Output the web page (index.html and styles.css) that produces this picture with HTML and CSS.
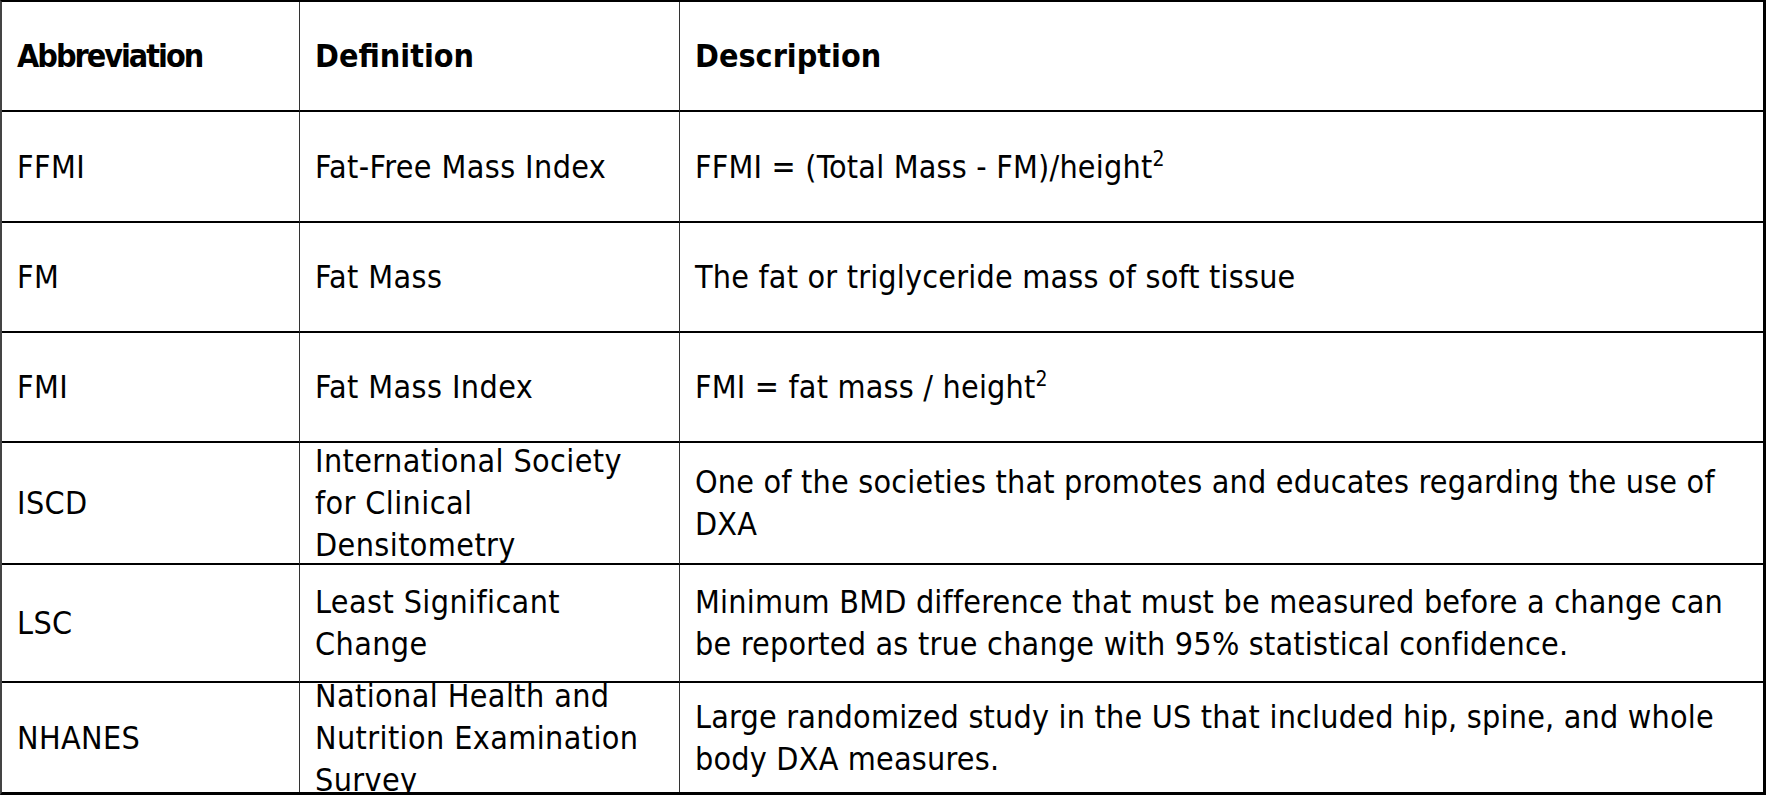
FILE: index.html
```html
<!DOCTYPE html>
<html lang="en">
<head>
<meta charset="utf-8">
<title>Abbreviations</title>
<link rel="stylesheet" href="styles.css">
</head>
<body>
<table class="glossary">
  <colgroup>
    <col class="col-abbr">
    <col class="col-def">
    <col class="col-desc">
  </colgroup>
  <thead>
    <tr class="row-head">
      <th class="th-abbr">Abbreviation</th>
      <th>Definition</th>
      <th>Description</th>
    </tr>
  </thead>
  <tbody>
    <tr class="row-ffmi">
      <td>FFMI</td>
      <td>Fat-Free Mass Index</td>
      <td>FFMI = (Total Mass - FM)/height<sup>2</sup></td>
    </tr>
    <tr class="row-single">
      <td>FM</td>
      <td>Fat Mass</td>
      <td>The fat or triglyceride mass of soft tissue</td>
    </tr>
    <tr class="row-single">
      <td>FMI</td>
      <td>Fat Mass Index</td>
      <td>FMI = fat mass / height<sup>2</sup></td>
    </tr>
    <tr class="row-iscd">
      <td><div class="fit">ISCD</div></td>
      <td><div class="fit">International Society for Clinical Densitometry</div></td>
      <td><div class="fit">One of the societies that promotes and educates regarding the use of DXA</div></td>
    </tr>
    <tr class="row-lsc">
      <td>LSC</td>
      <td>Least Significant Change</td>
      <td>Minimum BMD difference that must be measured before a change can be reported as true change with 95% statistical confidence.</td>
    </tr>
    <tr class="row-nhanes">
      <td><div class="fit">NHANES</div></td>
      <td><div class="fit">National Health and Nutrition Examination Survey</div></td>
      <td><div class="fit">Large randomized study in the US that included hip, spine, and whole body DXA measures.</div></td>
    </tr>
  </tbody>
</table>
</body>
</html>
```

FILE: styles.css
```css
* {
  box-sizing: border-box;
}

html,
body {
  margin: 0;
  padding: 0;
  background: #ffffff;
}

body {
  font-family: "DejaVu Sans Condensed", "DejaVu Sans", sans-serif;
  font-stretch: condensed;
  font-size: 32px;
  line-height: 42px;
  color: #000000;
}

.glossary {
  width: 1766px;
  table-layout: fixed;
  border-collapse: separate;
  border-spacing: 0;
  border-top: 2px solid #000000;
  border-left: 2px solid #444444;
  border-right: 3px solid #000000;
  border-bottom: 3px solid #000000;
}

.col-abbr {
  width: 298px;
}

.col-def {
  width: 380px;
}

.col-desc {
  width: 1083px;
}

.glossary th,
.glossary td {
  padding: 0 26px 0 15px;
  text-align: left;
  vertical-align: middle;
  border-bottom: 2px solid #000000;
  border-right: 1px solid #333333;
}

.glossary td {
  letter-spacing: 0.4px;
}

.glossary th {
  font-weight: bold;
  letter-spacing: 0;
}

.glossary .th-abbr {
  letter-spacing: -2px;
}

.glossary th:last-child,
.glossary td:last-child {
  border-right: none;
  padding-right: 18px;
}

.glossary td:last-child {
  letter-spacing: 0.2px;
}

.glossary tbody tr:last-child td {
  border-bottom: none;
}

.row-head th {
  height: 110px;
}

.row-ffmi td {
  height: 111px;
}

.row-single td {
  height: 110px;
}

.row-iscd td {
  height: 122px;
}

.row-lsc td {
  height: 118px;
}

.row-nhanes td {
  height: 109px;
}

.fit {
  display: flex;
  flex-direction: column;
  justify-content: center;
}

.row-iscd .fit {
  height: 120px;
}

.row-nhanes .fit {
  height: 109px;
}

.glossary sup {
  font-size: 21px;
  line-height: 0;
  vertical-align: 12px;
}
```
